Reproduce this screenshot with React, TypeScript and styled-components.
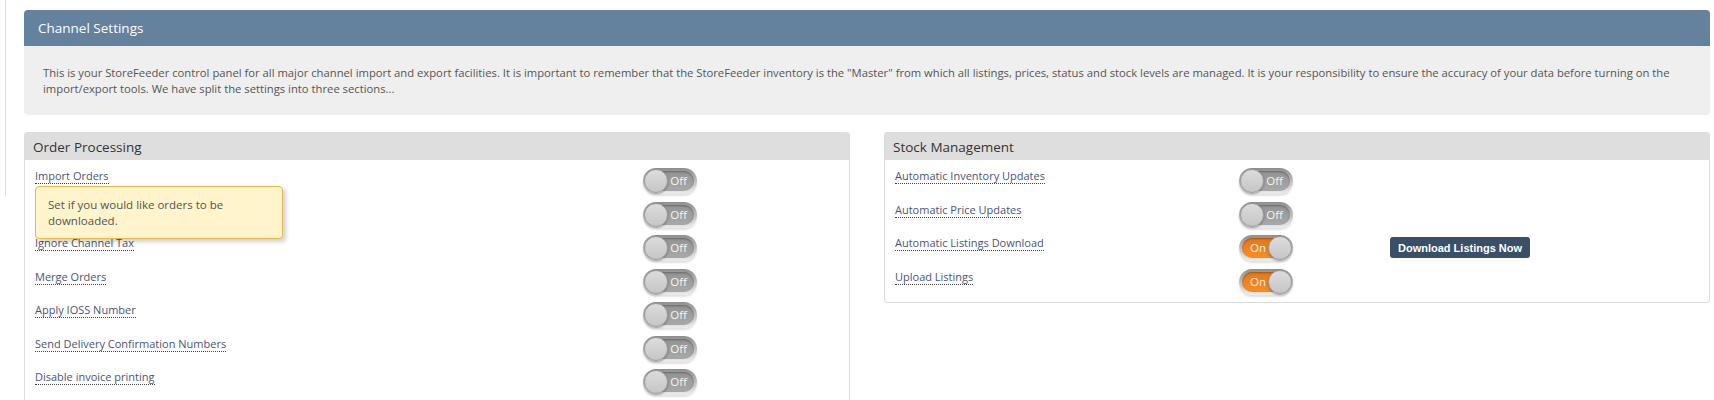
import React from "react";
import styled, { createGlobalStyle } from "styled-components";

const GlobalStyle = createGlobalStyle`
  html, body {
    margin: 0;
    padding: 0;
    background: #fff;
    font-family: "Open Sans", "Liberation Sans", sans-serif;
    color: #555;
  }
`;

const Page = styled.div`
  display: flex;
  align-items: flex-start;
  width: 1714px;
  height: 400px;
  overflow: hidden;
`;

const Rail = styled.div`
  width: 5px;
  height: 196px;
  border-right: 1px solid #d3e2f1;
  flex-shrink: 0;
`;

const Main = styled.main`
  flex: 1;
  padding: 10px 4px 0 18px;
  min-width: 0;
`;

const Card = styled.section`
  border-radius: 4px;
  overflow: hidden;
`;

const CardHeader = styled.h1`
  margin: 0;
  height: 36px;
  display: flex;
  align-items: center;
  padding: 0 14px;
  background: #64819d;
  color: #fff;
  font-size: 13.5px;
  font-weight: 400;
`;

const CardBody = styled.p`
  margin: 0;
  padding: 19px 19px 18px;
  background: #efefef;
  font-size: 11.25px;
  line-height: 16px;
  color: #555;
`;

const Columns = styled.div`
  display: grid;
  grid-template-columns: 1fr 1fr;
  gap: 34px;
  margin-top: 17px;
  align-items: start;
`;

const Panel = styled.section`
  border: 1px solid #dcdcdc;
  border-radius: 3px;
  background: #fff;
`;

const PanelHeader = styled.h2`
  margin: 0;
  height: 27px;
  display: flex;
  align-items: center;
  padding: 0 8px;
  background: #dedede;
  color: #333;
  font-size: 13.5px;
  font-weight: 400;
`;

const PanelBody = styled.div`
  padding: 8px 10px 0;
`;

const Row = styled.div<{ $labelWidth: number }>`
  display: grid;
  grid-template-columns: ${({ $labelWidth }) => $labelWidth}px 54px auto 1fr;
  align-items: start;
  height: 33.5px;
`;

const LabelWrap = styled.div`
  position: relative;
  display: flex;
  align-items: flex-start;
`;

const Label = styled.span`
  display: block;
  font-size: 11px;
  line-height: 15px;
  color: #4b5573;
  border-bottom: 1px dotted #444;
  cursor: help;
`;

const Tooltip = styled.div`
  position: absolute;
  top: calc(100% + 2px);
  left: 0;
  z-index: 5;
  width: 248px;
  box-sizing: border-box;
  padding: 10px 12px 9px;
  background: #fff4cc;
  border: 1px solid #e8b84a;
  border-radius: 4px;
  box-shadow: 3px 3px 4px rgba(0, 0, 0, 0.18);
  font-size: 11.5px;
  line-height: 16px;
  color: #555;
`;

const Switch = styled.span`
  position: relative;
  display: block;
  width: 54px;
  height: 26px;
  box-sizing: border-box;
  padding: 3px;
  border-radius: 13px;
  background: linear-gradient(to bottom, #8e8e8e 0%, #b9b9b9 45%, #ececec 100%);
  box-shadow: 0 2px 2px rgba(0, 0, 0, 0.12);
`;

const Track = styled.span<{ $on: boolean }>`
  display: flex;
  align-items: center;
  justify-content: ${({ $on }) => ($on ? "flex-start" : "flex-end")};
  height: 20px;
  padding: ${({ $on }) => ($on ? "0 0 0 8px" : "0 7px 0 0")};
  border-radius: 10px;
  background: ${({ $on }) =>
    $on
      ? "linear-gradient(to bottom, #e5761a, #f98e26)"
      : "linear-gradient(to bottom, #939393, #a9a9a9)"};
  box-shadow: inset 0 1px 2px rgba(0, 0, 0, 0.3);
  color: #f4f4f4;
  font-size: 11.5px;
  line-height: 1;
`;

const Knob = styled.span<{ $on: boolean }>`
  position: absolute;
  top: 1px;
  ${({ $on }) => ($on ? "right: 1px;" : "left: 1px;")}
  width: 24px;
  height: 24px;
  box-sizing: border-box;
  border-radius: 50%;
  border: 1px solid #9c9c9c;
  background: linear-gradient(to bottom, #dcdcdc, #c6c6c6);
  box-shadow: 0 1px 2px rgba(0, 0, 0, 0.35);
`;

const Button = styled.button`
  grid-column: 4;
  justify-self: start;
  margin: 2px 0 0 97px;
  height: 21px;
  padding: 0 8px;
  border: none;
  border-radius: 3px;
  background: #3a5068;
  color: #fff;
  font-family: "Liberation Sans", Arial, sans-serif;
  font-size: 11px;
  font-weight: 700;
  cursor: pointer;
`;

type Setting = { label: string; on: boolean; tip?: string; action?: string };

const orderSettings: Setting[] = [
  { label: "Import Orders", on: false, tip: "Set if you would like orders to be downloaded." },
  { label: "Import Orders From Channel", on: false },
  { label: "Ignore Channel Tax", on: false },
  { label: "Merge Orders", on: false },
  { label: "Apply IOSS Number", on: false },
  { label: "Send Delivery Confirmation Numbers", on: false },
  { label: "Disable invoice printing", on: false },
];

const stockSettings: Setting[] = [
  { label: "Automatic Inventory Updates", on: false },
  { label: "Automatic Price Updates", on: false },
  { label: "Automatic Listings Download", on: true, action: "Download Listings Now" },
  { label: "Upload Listings", on: true },
];

function Toggle({ on }: { on: boolean }) {
  return (
    <Switch>
      <Track $on={on}>{on ? "On" : "Off"}</Track>
      <Knob $on={on} />
    </Switch>
  );
}

function SettingsPanel({
  title,
  items,
  labelWidth,
}: {
  title: string;
  items: Setting[];
  labelWidth: number;
}) {
  return (
    <Panel>
      <PanelHeader>{title}</PanelHeader>
      <PanelBody>
        {items.map((item) => (
          <Row key={item.label} $labelWidth={labelWidth}>
            <LabelWrap>
              <Label>{item.label}</Label>
              {item.tip && <Tooltip>{item.tip}</Tooltip>}
            </LabelWrap>
            <Toggle on={item.on} />
            {item.action && <Button>{item.action}</Button>}
          </Row>
        ))}
      </PanelBody>
    </Panel>
  );
}

export default function App() {
  return (
    <>
      <GlobalStyle />
      <Page>
        <Rail />
        <Main>
          <Card>
            <CardHeader>Channel Settings</CardHeader>
            <CardBody>
              This is your StoreFeeder control panel for all major channel import and export
              facilities. It is important to remember that the StoreFeeder inventory is the
              "Master" from which all listings, prices, status and stock levels are managed. It is
              your responsibility to ensure the accuracy of your data before turning on the
              import/export tools. We have split the settings into three sections...
            </CardBody>
          </Card>
          <Columns>
            <SettingsPanel title="Order Processing" items={orderSettings} labelWidth={608} />
            <SettingsPanel title="Stock Management" items={stockSettings} labelWidth={344} />
          </Columns>
        </Main>
      </Page>
    </>
  );
}
